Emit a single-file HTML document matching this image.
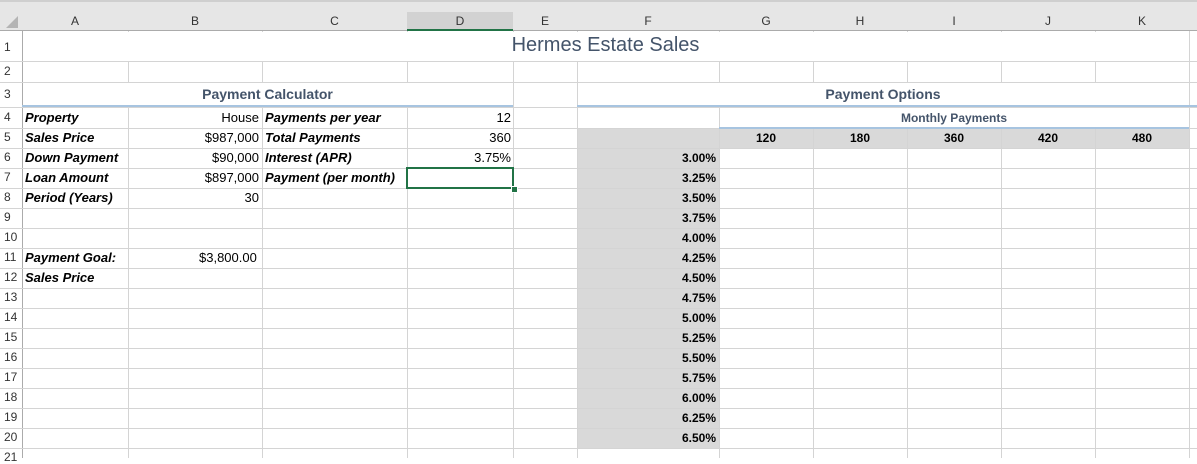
<!DOCTYPE html><html><head><style>
body{margin:0;width:1197px;height:458px;overflow:hidden;background:#fff;font-family:"Liberation Sans",sans-serif;font-size:13px;color:#000}
.a{position:absolute}
.vl{position:absolute;top:31px;bottom:0;width:1px;background:#d4d4d4}
.hl{position:absolute;left:0;right:0;height:1px;background:#d4d4d4}
.ch{position:absolute;top:12px;height:19px;line-height:19px;text-align:center;font-size:12px;color:#333}
.rn{position:absolute;left:4px;font-size:12px;color:#333;width:18px}
.t{position:absolute;height:20px;line-height:20px;white-space:nowrap}
.bi{font-weight:bold;font-style:italic}
.r{text-align:right}
.b{font-weight:bold}
</style></head><body>
<div class="a" style="left:0;top:0;width:1197px;height:31px;background:#e6e6e6;border-bottom:1px solid #ababab;box-sizing:border-box"></div>
<div class="a" style="left:0;top:0;width:1197px;height:2px;background:#cfcfcf"></div>
<div class="a" style="left:0;top:31px;width:22px;height:427px;background:#fff;border-right:1px solid #ababab"></div>
<div class="a" style="left:407px;top:12px;width:106px;height:19px;background:#d2d2d2;border-bottom:2px solid #217346;box-sizing:border-box"></div>
<!-- gray fills -->
<div class="a" style="left:577px;top:128px;width:142px;height:320px;background:#d9d9d9"></div>
<div class="a" style="left:719px;top:128px;width:470px;height:20px;background:#d9d9d9"></div>
<!-- vertical lines -->
<div class="vl" style="left:128px"></div><div class="vl" style="left:262px"></div><div class="vl" style="left:407px"></div><div class="vl" style="left:513px"></div><div class="vl" style="left:577px"></div><div class="vl" style="left:719px"></div><div class="vl" style="left:813px"></div><div class="vl" style="left:907px"></div><div class="vl" style="left:1001px"></div><div class="vl" style="left:1095px"></div><div class="vl" style="left:1189px"></div>
<!-- horizontal lines -->
<div class="hl" style="top:61px"></div><div class="hl" style="top:82px"></div><div class="hl" style="top:107px"></div>
<div class="hl" style="top:128px"></div><div class="hl" style="top:148px"></div><div class="hl" style="top:168px"></div><div class="hl" style="top:188px"></div><div class="hl" style="top:208px"></div><div class="hl" style="top:228px"></div><div class="hl" style="top:248px"></div><div class="hl" style="top:268px"></div><div class="hl" style="top:288px"></div><div class="hl" style="top:308px"></div><div class="hl" style="top:328px"></div><div class="hl" style="top:348px"></div><div class="hl" style="top:368px"></div><div class="hl" style="top:388px"></div><div class="hl" style="top:408px"></div><div class="hl" style="top:428px"></div><div class="hl" style="top:448px"></div>
<!-- white-out row 1 and row 3 merged areas -->
<div class="a" style="left:23px;top:32px;width:1166px;height:29px;background:#fff"></div>
<div class="a" style="left:23px;top:83px;width:490px;height:23px;background:#fff"></div>
<div class="a" style="left:578px;top:83px;width:611px;height:23px;background:#fff"></div>
<div class="a" style="left:578px;top:108px;width:141px;height:20px;background:#fff"></div>
<div class="a" style="left:720px;top:108px;width:469px;height:20px;background:#fff"></div>
<!-- blue rules -->
<div class="a" style="left:22px;top:105px;width:491px;height:2px;background:#a7c4e0"></div>
<div class="a" style="left:577px;top:105px;width:620px;height:2px;background:#a7c4e0"></div>
<div class="a" style="left:719px;top:127px;width:470px;height:2px;background:#a7c4e0"></div>
<!-- column headers -->
<div class="ch" style="left:22px;width:106px">A</div><div class="ch" style="left:128px;width:134px">B</div><div class="ch" style="left:262px;width:145px">C</div><div class="ch" style="left:407px;width:106px">D</div><div class="ch" style="left:513px;width:64px">E</div><div class="ch" style="left:577px;width:142px">F</div><div class="ch" style="left:719px;width:94px">G</div><div class="ch" style="left:813px;width:94px">H</div><div class="ch" style="left:907px;width:94px">I</div><div class="ch" style="left:1001px;width:94px">J</div><div class="ch" style="left:1095px;width:94px">K</div>
<div class="a" style="left:6px;top:16px;width:0;height:0;border-left:12px solid transparent;border-bottom:12px solid #b4b4b4"></div>
<!-- row numbers -->
<div class="rn" style="top:40px">1</div><div class="rn" style="top:64px">2</div><div class="rn" style="top:87px">3</div>
<div class="rn" style="top:110px">4</div><div class="rn" style="top:130px">5</div><div class="rn" style="top:150px">6</div><div class="rn" style="top:170px">7</div><div class="rn" style="top:190px">8</div><div class="rn" style="top:210px">9</div><div class="rn" style="top:230px">10</div><div class="rn" style="top:250px">11</div><div class="rn" style="top:270px">12</div><div class="rn" style="top:290px">13</div><div class="rn" style="top:310px">14</div><div class="rn" style="top:330px">15</div><div class="rn" style="top:350px">16</div><div class="rn" style="top:370px">17</div><div class="rn" style="top:390px">18</div><div class="rn" style="top:410px">19</div><div class="rn" style="top:430px">20</div><div class="rn" style="top:450px">21</div>
<!-- title -->
<div class="a" style="left:22px;width:1167px;top:34px;text-align:center;font-size:20px;color:#44546a">Hermes Estate Sales</div>
<div class="t b" style="left:22px;width:491px;top:84px;text-align:center;font-size:14px;color:#44546a">Payment Calculator</div>
<div class="t b" style="left:577px;width:612px;top:84px;text-align:center;font-size:14px;color:#44546a">Payment Options</div>
<div class="t b" style="left:719px;width:470px;top:108px;text-align:center;font-size:12px;color:#44546a">Monthly Payments</div>
<!-- labels -->
<div class="t bi" style="left:25px;top:108px">Property</div>
<div class="t bi" style="left:25px;top:128px">Sales Price</div>
<div class="t bi" style="left:25px;top:148px">Down Payment</div>
<div class="t bi" style="left:25px;top:168px">Loan Amount</div>
<div class="t bi" style="left:25px;top:188px">Period (Years)</div>
<div class="t bi" style="left:25px;top:248px">Payment Goal:</div>
<div class="t bi" style="left:25px;top:268px">Sales Price</div>
<div class="t r" style="left:128px;width:131px;top:108px">House</div>
<div class="t r" style="left:128px;width:131px;top:128px">$987,000</div>
<div class="t r" style="left:128px;width:131px;top:148px">$90,000</div>
<div class="t r" style="left:128px;width:131px;top:168px">$897,000</div>
<div class="t r" style="left:128px;width:131px;top:188px">30</div>
<div class="t" style="left:199px;top:248px">$3,800.00</div>
<div class="t bi" style="left:265px;top:108px">Payments per year</div>
<div class="t bi" style="left:265px;top:128px">Total Payments</div>
<div class="t bi" style="left:265px;top:148px">Interest (APR)</div>
<div class="t bi" style="left:265px;top:168px">Payment (per month)</div>
<div class="t r" style="left:407px;width:104px;top:108px">12</div>
<div class="t r" style="left:407px;width:104px;top:128px">360</div>
<div class="t r" style="left:407px;width:104px;top:148px">3.75%</div>
<div class="a" style="left:406px;top:167px;width:108px;height:22px;border:2px solid #217346;box-sizing:border-box"></div>
<div class="a" style="left:511px;top:186px;width:5px;height:5px;background:#217346;border:1px solid #fff"></div>
<!-- G5:K5 -->
<div class="t b" style="left:719px;width:94px;top:128px;text-align:center;font-size:12px">120</div>
<div class="t b" style="left:813px;width:94px;top:128px;text-align:center;font-size:12px">180</div>
<div class="t b" style="left:907px;width:94px;top:128px;text-align:center;font-size:12px">360</div>
<div class="t b" style="left:1001px;width:94px;top:128px;text-align:center;font-size:12px">420</div>
<div class="t b" style="left:1095px;width:94px;top:128px;text-align:center;font-size:12px">480</div>
<!-- rates -->
<div class="t b r" style="left:577px;width:139px;top:148px;font-size:12px">3.00%</div>
<div class="t b r" style="left:577px;width:139px;top:168px;font-size:12px">3.25%</div>
<div class="t b r" style="left:577px;width:139px;top:188px;font-size:12px">3.50%</div>
<div class="t b r" style="left:577px;width:139px;top:208px;font-size:12px">3.75%</div>
<div class="t b r" style="left:577px;width:139px;top:228px;font-size:12px">4.00%</div>
<div class="t b r" style="left:577px;width:139px;top:248px;font-size:12px">4.25%</div>
<div class="t b r" style="left:577px;width:139px;top:268px;font-size:12px">4.50%</div>
<div class="t b r" style="left:577px;width:139px;top:288px;font-size:12px">4.75%</div>
<div class="t b r" style="left:577px;width:139px;top:308px;font-size:12px">5.00%</div>
<div class="t b r" style="left:577px;width:139px;top:328px;font-size:12px">5.25%</div>
<div class="t b r" style="left:577px;width:139px;top:348px;font-size:12px">5.50%</div>
<div class="t b r" style="left:577px;width:139px;top:368px;font-size:12px">5.75%</div>
<div class="t b r" style="left:577px;width:139px;top:388px;font-size:12px">6.00%</div>
<div class="t b r" style="left:577px;width:139px;top:408px;font-size:12px">6.25%</div>
<div class="t b r" style="left:577px;width:139px;top:428px;font-size:12px">6.50%</div>
</body></html>
